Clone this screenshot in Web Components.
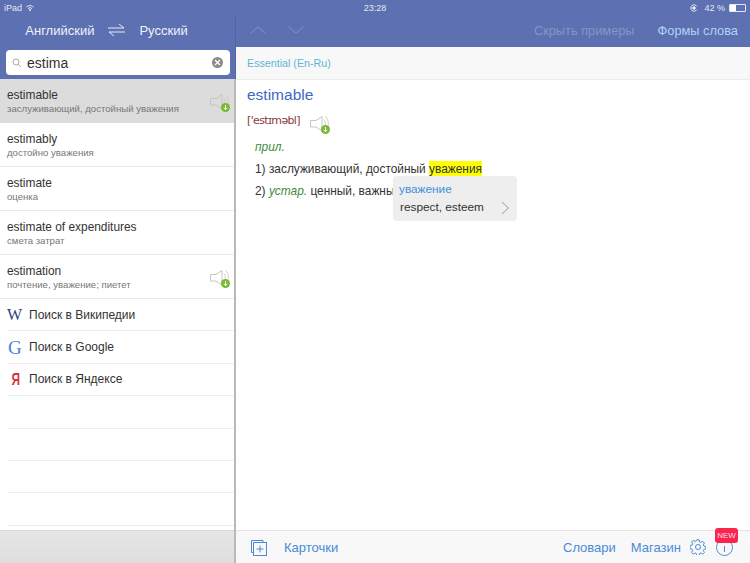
<!DOCTYPE html>
<html lang="ru">
<head>
<meta charset="utf-8">
<title>Словарь</title>
<style>
  html, body { margin: 0; padding: 0; height: 100%; }
  body { font-family: "Liberation Sans", Arial, sans-serif; color: #333; background: #fff; overflow: hidden; }
</style>
</head>
<body>
<dict-app></dict-app>

<script>
const SPEAKER = `
  <svg width="22" height="20" viewBox="0 0 22 20" fill="none">
    <path d="M1.500 5.500h5.500L13 1.500v14.500L7 12H1.500z" stroke="#c6c6c6" stroke-width="1"/>
    <path d="M15 4.500c1.800 2.400 1.800 5.600 0 8M16.500 1.500c3.600 3.600 3.600 9.400 1.500 11" stroke="#cfcfcf" stroke-width="1"/>
    <circle cx="16.500" cy="14.500" r="4.500" fill="#7ab935"/>
    <path d="M16.500 12v4.500M14.700 14.800l1.800 1.800 1.800-1.800" stroke="#f4f9ec" stroke-width="1"/>
  </svg>`;

class StatusBar extends HTMLElement {
  constructor() {
    super();
    this.attachShadow({ mode: "open" });
    this.shadowRoot.innerHTML = `
      <style>
        :host { display: grid; grid-template-columns: 1fr auto 1fr; align-items: center; height: 15px; background: #5c70b2; color: #e4e8f4; font-size: 9px; padding: 0 4px 0 4px; box-sizing: border-box; }
        .left { display: flex; align-items: center; gap: 4px; }
        .right { display: flex; align-items: center; justify-content: flex-end; gap: 4px; }
        .batt { display: inline-block; width: 15px; height: 6px; border: 1px solid #e4e8f4; border-radius: 1px; background: linear-gradient(90deg, #fff 42%, transparent 42%); }
      </style>
      <div class="left">
        <span>iPad</span>
        <svg width="8" height="6" viewBox="0 0 8 6" fill="none" stroke="#e4e8f4" stroke-width="1"><path d="M.5 2a5 5 0 0 1 7 0M2 3.500a3 3 0 0 1 4 0"/><circle cx="4" cy="5" r=".6" fill="#e4e8f4"/></svg>
      </div>
      <div>23:28</div>
      <div class="right">
        <svg width="8" height="8" viewBox="0 0 8 8" fill="none" stroke="#e4e8f4" stroke-width="1"><path d="M6.800 5.500a3.200 3.200 0 1 1 0-3"/><circle cx="4" cy="4" r="1.300" fill="#e4e8f4"/></svg>
        <span style="margin-left:2px">42 %</span>
        <span class="batt"></span>
      </div>`;
  }
}

class SearchBox extends HTMLElement {
  constructor() {
    super();
    this.attachShadow({ mode: "open" });
    this.shadowRoot.innerHTML = `
      <style>
        :host { display: flex; align-items: center; height: 25px; margin: 0 5px 0 6px; padding: 0 7px 0 6px; background: #fff; border-radius: 4px; }
        .text { flex: 1; margin-left: 5px; font-size: 14px; color: #333; }
        .clear { width: 11px; height: 11px; border-radius: 50%; background: #8a8a8a; color: #fff; display: flex; align-items: center; justify-content: center; }
      </style>
      <svg width="10" height="10" viewBox="0 0 10 10" fill="none" stroke="#aaa" stroke-width="1"><circle cx="4" cy="4" r="3"/><path d="M6.300 6.300 9 9"/></svg>
      <span class="text"><slot></slot></span>
      <span class="clear"><svg width="7" height="7" viewBox="0 0 7 7" stroke="#fff" stroke-width="1.300"><path d="M1 1l5 5M6 1l-5 5"/></svg></span>`;
  }
}

class WordRow extends HTMLElement {
  constructor() {
    super();
    this.attachShadow({ mode: "open" });
  }
  connectedCallback() {
    const sub = this.getAttribute("sub");
    const sound = this.hasAttribute("sound") ? SPEAKER : "";
    this.shadowRoot.innerHTML = `
      <style>
        :host { display: flex; align-items: center; height: 44px; box-sizing: border-box; padding: 0 3px 1px 7px; border-bottom: 1px solid #e9e9e9; }
        :host([selected]) { background: #dcdcdc; border-bottom-color: #dcdcdc; }
        .txt { flex: 1; min-width: 0; padding-top: 2px; }
        .word { font-size: 11.900px; line-height: 15px; color: #333; }
        .sub { font-size: 9.600px; line-height: 12px; margin-top: 0; color: #777; }
        svg { display: block; margin-top: 6px; }
      </style>
      <div class="txt"><div class="word"><slot></slot></div><div class="sub">${sub}</div></div>
      ${sound}`;
  }
}

class LinkRow extends HTMLElement {
  constructor() {
    super();
    this.attachShadow({ mode: "open" });
    this.shadowRoot.innerHTML = `
      <style>
        :host { display: flex; align-items: center; height: 32.400px; box-sizing: border-box; margin-left: 7px; border-bottom: 1px solid #ececec; font-size: 12px; color: #333; }
        .ico { width: 22px; flex: none; display: flex; }
      </style>
      <span class="ico"><slot name="icon"></slot></span>
      <span><slot></slot></span>`;
  }
}

class SidePanel extends HTMLElement {
  constructor() {
    super();
    this.attachShadow({ mode: "open" });
    this.shadowRoot.innerHTML = `
      <style>
        :host { display: flex; flex-direction: column; width: 234px; flex: none; background: #fff; border-right: 2px solid #b9b9b9; box-sizing: content-box; }
        header { height: 64px; width: 235px; margin-right: -2px; background: #5c70b2; border-right: 1px solid #52649f; flex: none; box-sizing: content-box; }
        .langs { display: flex; align-items: center; justify-content: center; height: 30px; margin-bottom: 5px; gap: 14px; color: #f0f2f9; font-size: 13px; padding-right: 22px; }
        .langs svg { display: block; }
        .list { flex: 1; min-height: 0; }
        .foot { height: 33px; flex: none; background: linear-gradient(#e6e6e6, #dedede); border-top: 1px solid #dadada; box-sizing: border-box; }
      </style>
      <header>
        <div class="langs">
          <span>Английский</span>
          <svg width="17" height="14" viewBox="0 0 17 14" fill="none" stroke="#e8ebf5" stroke-width="1"><path d="M0 5h16L11 1M17 9H1l5 4"/></svg>
          <span>Русский</span>
        </div>
        <slot name="search"></slot>
      </header>
      <div class="list"><slot></slot></div>
      <div class="foot"></div>`;
  }
}

class ArticlePopup extends HTMLElement {
  constructor() {
    super();
    this.attachShadow({ mode: "open" });
    this.shadowRoot.innerHTML = `
      <style>
        :host { position: absolute; left: 157px; top: 96px; width: 124px; height: 45px; box-sizing: border-box; background: #eeeeee; border-radius: 4px; padding: 6px 0 0 6px; font-size: 11.800px; }
        .hw { color: #3f8fdc; line-height: 15px; }
        .tr { display: flex; justify-content: space-between; align-items: center; margin-top: 3px; padding: 0 7px 0 1px; color: #333; line-height: 15px; }
      </style>
      <div class="hw"><slot name="word"></slot></div>
      <div class="tr"><span><slot name="tr"></slot></span>
        <svg width="9" height="14" viewBox="0 0 9 14" fill="none" stroke="#999" stroke-width="1"><path d="M1 1l6.500 6L1 13"/></svg>
      </div>`;
  }
}

class ArticlePane extends HTMLElement {
  constructor() {
    super();
    this.attachShadow({ mode: "open" });
    this.shadowRoot.innerHTML = `
      <style>
        :host { display: flex; flex-direction: column; flex: 1; min-width: 0; background: #fff; }
        header { height: 32px; background: #5c70b2; display: flex; align-items: center; flex: none; padding: 0 12px 2px 14px; box-sizing: border-box; font-size: 12.800px; }
        .nav { display: flex; gap: 22px; flex: 1; }
        .nav svg { display: block; }
        .dim { color: #8794c6; margin-right: 23px; }
        .forms { color: #b3d2f2; }
        .source { height: 33px; flex: none; box-sizing: border-box; background: #f8f8f8; border-bottom: 1px solid #ececec; padding: 0 11px 1px; display: flex; align-items: center; font-size: 10.700px; color: #5db5d6; }
        .body { flex: 1; min-height: 0; position: relative; padding: 6px 0 0 11px; }
        h1 { margin: 0; font: 400 15.500px/18px "Liberation Sans", Arial, sans-serif; color: #3f68c4; }
        .tr { display: flex; align-items: flex-start; margin-top: 7px; height: 24px; font: 11px/14px "DejaVu Sans", sans-serif; color: #8a3a3a; gap: 9px; }
        .tr span { letter-spacing: -.65px; margin-top: 3px; }
        .tr svg { margin-top: 4px; display: block; }
        .pos { font-style: italic; color: #3f8a3f; font-size: 11.900px; line-height: 14px; margin: 5px 0 0 8px; }
        .def { font-size: 11.900px; line-height: 14px; margin: 8px 0 0 8px; color: #333; white-space: nowrap; }
        .def i { color: #3f8a3f; }
        mark { background: #ffff00; color: #333; padding: 1px 0; }
        footer { height: 33px; flex: none; box-sizing: border-box; background: #f8f8f8; border-top: 1px solid #e4e4e4; display: flex; align-items: center; padding: 0 17px 0 14px; font-size: 13px; color: #4a8ad8; position: relative; }
        .cards { margin-left: 17px; flex: 1; }
        .shop { margin-left: 15px; }
        .gear { margin-left: 9px; display: block; }
        .info { margin-left: 10px; display: block; }
        .badge { position: absolute; right: 12px; top: -3px; width: 23px; height: 15px; background: #f9254f; color: #fde; font-size: 8px; line-height: 15px; text-align: center; border-radius: 3px; }
      </style>
      <header>
        <div class="nav">
          <svg width="16" height="8" viewBox="0 0 16 8" fill="none" stroke="#8494cc" stroke-width="1"><path d="M.5 7.500 8 .8l7.500 6.700"/></svg>
          <svg width="16" height="8" viewBox="0 0 16 8" fill="none" stroke="#8494cc" stroke-width="1"><path d="M.5.500 8 7.200 15.500.5"/></svg>
        </div>
        <span class="dim">Скрыть примеры</span>
        <span class="forms">Формы слова</span>
      </header>
      <div class="source">Essential (En-Ru)</div>
      <div class="body">
        <h1>estimable</h1>
        <div class="tr"><span>['estɪməbl]</span>${SPEAKER}</div>
        <div class="pos">прил.</div>
        <div class="def">1) заслуживающий, достойный <mark>уважения</mark></div>
        <div class="def">2) <i>устар.</i> ценный, важный</div>
        <slot name="popup"></slot>
      </div>
      <footer>
        <svg width="17" height="17" viewBox="0 0 17 17" fill="none" stroke="#4a8ad8" stroke-width="1"><path d="M3.500 13.500H1.500V1.500H13V3.500"/><rect x="3.500" y="3.500" width="13" height="13"/><path d="M10 6.500v7M6.500 10h7"/></svg>
        <span class="cards">Карточки</span>
        <span>Словари</span>
        <span class="shop">Магазин</span>
        <svg class="gear" width="16" height="16" viewBox="0 0 16 16" fill="none" stroke="#4a8ad8" stroke-width="1"><circle cx="8" cy="8" r="2.500"/><path d="M6.800.8h2.400l.4 2 1.300.6 1.800-1.100 1.700 1.700-1.100 1.800.6 1.300 2 .4v2.400l-2 .4-.6 1.300 1.100 1.800-1.700 1.700-1.800-1.100-1.300.6-.4 2H6.800l-.4-2-1.300-.6-1.800 1.100-1.700-1.700 1.100-1.800-.6-1.300-2-.4V6.500l2-.4.6-1.300-1.100-1.800 1.700-1.700 1.800 1.100 1.300-.6z"/></svg>
        <svg class="info" width="17" height="17" viewBox="0 0 17 17" fill="none" stroke="#4a8ad8" stroke-width="1"><circle cx="8.500" cy="8.500" r="8"/><path d="M8.500 7v6"/></svg>
        <span class="badge">NEW</span>
      </footer>`;
  }
}

class DictApp extends HTMLElement {
  constructor() {
    super();
    this.attachShadow({ mode: "open" });
    this.shadowRoot.innerHTML = `
      <style>
        :host { display: flex; flex-direction: column; width: 750px; height: 563px; overflow: hidden; }
        .cols { display: flex; flex: 1; min-height: 0; }
        .ic { font-family: "Liberation Serif", serif; font-size: 17px; line-height: 17px; display: block; }
      </style>
      <status-bar></status-bar>
      <div class="cols">
        <side-panel>
          <search-box slot="search">estima</search-box>
          <word-row selected sound sub="заслуживающий, достойный уважения">estimable</word-row>
          <word-row sub="достойно уважения">estimably</word-row>
          <word-row sub="оценка">estimate</word-row>
          <word-row sub="смета затрат">estimate of expenditures</word-row>
          <word-row sound sub="почтение, уважение; пиетет">estimation</word-row>
          <link-row><span slot="icon" class="ic" style="color:#2f3f7f;font-size:16px">W</span>Поиск в Википедии</link-row>
          <link-row><span slot="icon" class="ic" style="color:#4a7fe0;font-size:19px;padding-left:1px">G</span>Поиск в Google</link-row>
          <link-row><span slot="icon" class="ic" style="color:#d9333f;font-size:17px;padding-left:3px;font-weight:bold;font-family:'Liberation Sans',sans-serif;transform:scaleX(.7)">Я</span>Поиск в Яндексе</link-row>
          <link-row></link-row>
          <link-row></link-row>
          <link-row></link-row>
          <link-row></link-row>
        </side-panel>
        <article-pane>
          <article-popup slot="popup">
            <span slot="word">уважение</span>
            <span slot="tr">respect, esteem</span>
          </article-popup>
        </article-pane>
      </div>`;
  }
}

customElements.define("status-bar", StatusBar);
customElements.define("search-box", SearchBox);
customElements.define("word-row", WordRow);
customElements.define("link-row", LinkRow);
customElements.define("side-panel", SidePanel);
customElements.define("article-popup", ArticlePopup);
customElements.define("article-pane", ArticlePane);
customElements.define("dict-app", DictApp);
</script>
</body>
</html>
